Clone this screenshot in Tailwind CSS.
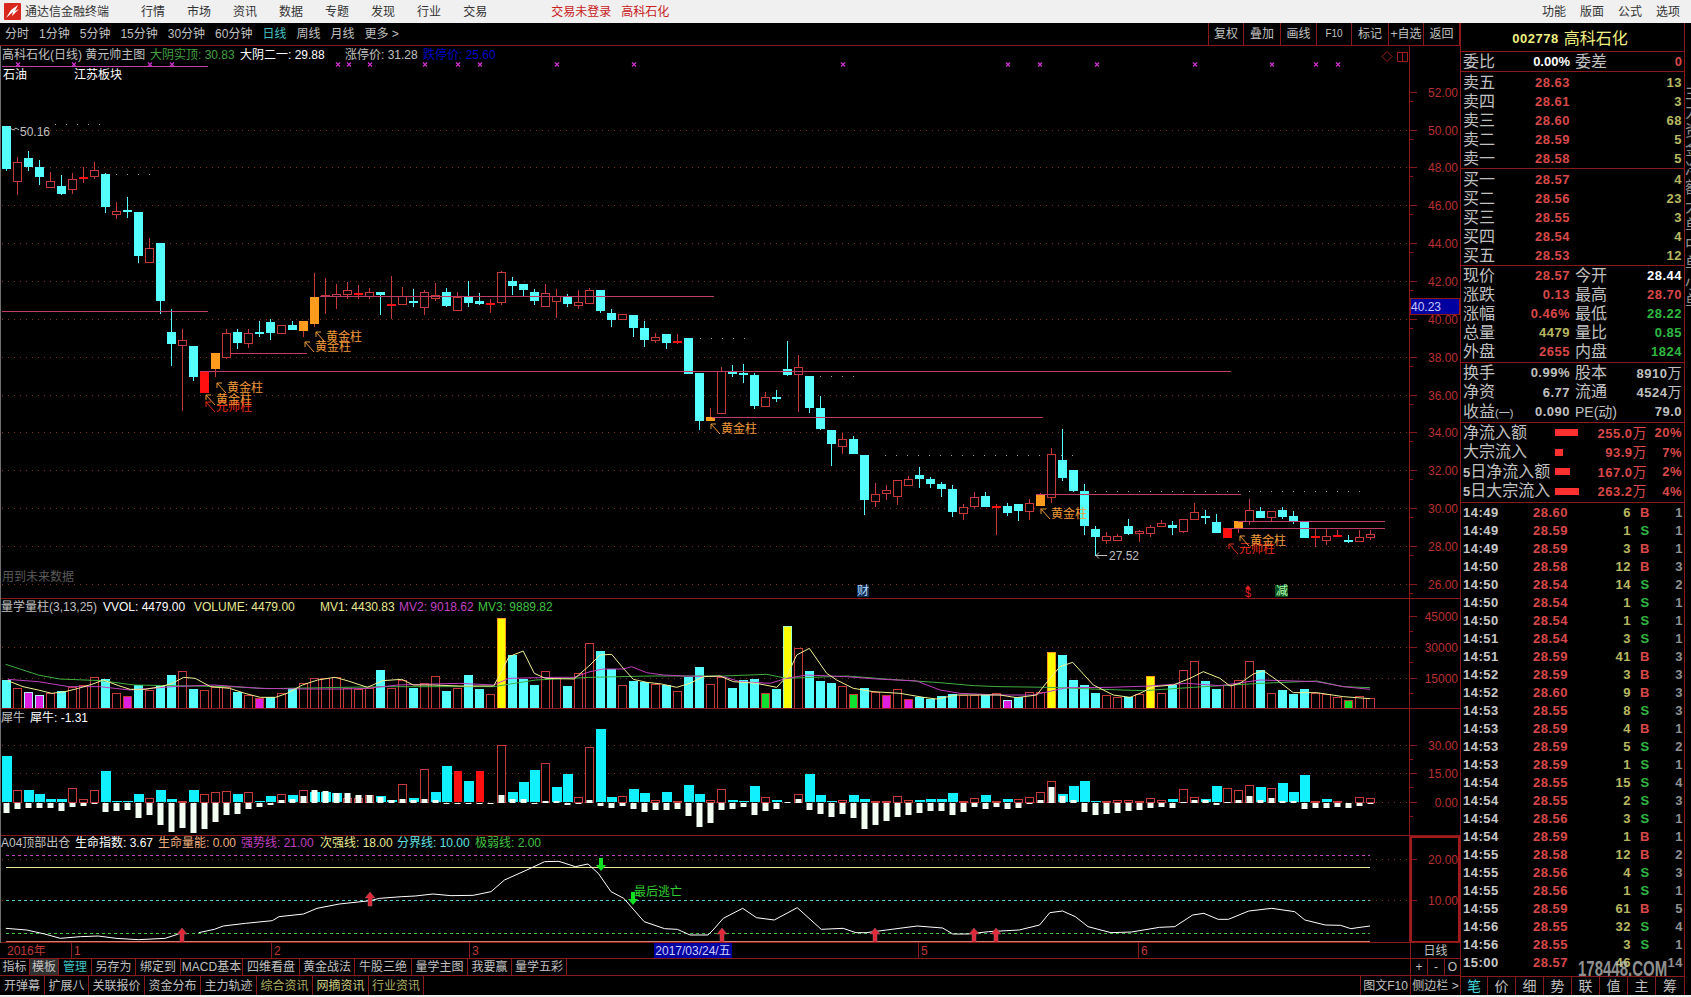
<!DOCTYPE html>
<html lang="zh">
<head>
<meta charset="UTF-8">
<title>通达信金融终端</title>
<script src="https://cdn.jsdelivr.net/npm/@tailwindcss/browser@4"></script>
</head>
<body class="bg-black">
<div class="w-[1691px] h-[997px] overflow-hidden flex flex-col bg-black text-[12px] leading-none text-[#c0c0c0] font-['Liberation_Sans','Noto_Sans_CJK_SC',sans-serif]">

  <!-- title bar -->
  <div class="h-[23px] shrink-0 bg-[#f0f0f0] flex items-center text-[#333]">
    <svg width="17" height="17" viewBox="0 0 17 17" class="ml-[4px] shrink-0"><rect width="17" height="17" rx="1" fill="#d8281e"/><path d="M2 15 L7 7 L14 2 L11 8 L15 6 L8 13 L9 9 Z" fill="#fff"/></svg>
    <span class="ml-[4px]">通达信金融终端</span>
    <div class="ml-[32px] flex gap-[22px]"><span>行情</span><span>市场</span><span>资讯</span><span>数据</span><span>专题</span><span>发现</span><span>行业</span><span>交易</span></div>
    <div class="ml-[64px] flex gap-[10px] text-[#c8201c]"><span>交易未登录</span><span>高科石化</span></div>
    <div class="ml-auto mr-[11px] flex gap-[14px]"><span>功能</span><span>版面</span><span>公式</span><span>选项</span></div>
  </div>

  <div class="flex h-[972px] shrink-0">
    <!-- left column -->
    <div class="w-[1460px] shrink-0 flex flex-col">
      <div class="h-[23px] shrink-0 flex items-center border-b border-[#8a1a1a] pl-[5px] gap-[10px]">
        <span>分时</span><span>1分钟</span><span>5分钟</span><span>15分钟</span><span>30分钟</span><span>60分钟</span><span class="text-[#40c0c0]">日线</span><span>周线</span><span>月线</span><span>更多 &gt;</span>
        <div class="ml-auto flex h-full border-r border-[#8a1a1a]">
          <span class="w-[35px] flex items-center justify-center border-l border-[#8a1a1a]">复权</span>
          <span class="w-[37px] flex items-center justify-center border-l border-[#8a1a1a]">叠加</span>
          <span class="w-[36px] flex items-center justify-center border-l border-[#8a1a1a]">画线</span>
          <span class="w-[35px] flex items-center justify-center border-l border-[#8a1a1a] text-[10px]">F10</span>
          <span class="w-[37px] flex items-center justify-center border-l border-[#8a1a1a]">标记</span>
          <span class="w-[35px] flex items-center justify-center border-l border-[#8a1a1a]">+自选</span>
          <span class="w-[36px] flex items-center justify-center border-l border-[#8a1a1a]">返回</span>
        </div>
      </div>

      <!-- chart panels, the svg holds the plotted data -->
      <div class="relative h-[897px] shrink-0 border-l border-[#707070]">
        <svg id="chart" class="absolute left-[-1px] top-0" width="1460" height="897" viewBox="0 46 1460 897"></svg>
        <div class="relative h-[553px] border-b border-[#8a1a1a]">
          <div class="flex h-[17px] items-center pl-[1px]">
            <span class="w-[148px]">高科石化(日线) 黄元帅主图</span>
            <span class="w-[90px] text-[#40a040]">大阴实顶: 30.83</span>
            <span class="w-[105px] text-white">大阴二一: 29.88</span>
            <span class="w-[78px]">涨停价: 31.28</span>
            <span class="text-[#0000c8]">跌停价: 25.60</span>
          </div>
          <div class="flex mt-[6px] pl-[2px] text-white"><span class="w-[71px]">石油</span><span>江苏板块</span></div>
        </div>
        <div class="relative h-[110px] border-b border-[#8a1a1a]">
          <div class="flex h-[16px] items-center">
            <span class="w-[102px]">量学量柱(3,13,25)</span>
            <span class="w-[91px] text-white">VVOL: 4479.00</span>
            <span class="w-[126px] text-[#e8e890]">VOLUME: 4479.00</span>
            <span class="w-[79px] text-[#e8e890]">MV1: 4430.83</span>
            <span class="w-[79px] text-[#c040c0]">MV2: 9018.62</span>
            <span class="text-[#40c040]">MV3: 9889.82</span>
          </div>
        </div>
        <div class="relative h-[127px] border-b border-[#8a1a1a]">
          <div class="flex h-[17px] items-center text-white"><span class="w-[29px] text-[#c0c0c0]">犀牛</span><span>犀牛: -1.31</span></div>
        </div>
        <div class="relative h-[107px] border-b border-[#8a1a1a]">
          <div class="flex h-[14px] items-center">
            <span class="w-[74px]">A04顶部出仓</span>
            <span class="w-[83px] text-white">生命指数: 3.67</span>
            <span class="w-[83px] text-[#f0b080]">生命量能: 0.00</span>
            <span class="w-[79px] text-[#c040c0]">强势线: 21.00</span>
            <span class="w-[77px] text-[#e8e890]">次强线: 18.00</span>
            <span class="w-[78px] text-[#60e0e0]">分界线: 10.00</span>
            <span class="text-[#40c040]">极弱线: 2.00</span>
          </div>
        </div>
      </div>

      <!-- date axis -->
      <div class="h-[16px] shrink-0 flex items-stretch border-b border-[#8a1a1a]">
        <span class="w-[71px] pl-[7px] flex items-center text-[#c03838]">2016年</span>
        <span class="w-[200px] pl-[2px] flex items-center border-l border-[#8a1a1a] text-[#c03838]">1</span>
        <span class="w-[198px] pl-[2px] flex items-center border-l border-[#8a1a1a] text-[#c03838]">2</span>
        <span class="w-[185px] pl-[2px] flex items-center border-l border-[#8a1a1a] text-[#c03838]">3</span>
        <span class="w-[78px] flex items-center justify-center bg-[#0000a0] text-[#d0d0ff]">2017/03/24/五</span>
        <span class="w-[186px] pr-[2px] flex items-center justify-end text-[#c03838]"></span>
        <span class="w-[220px] pl-[2px] flex items-center border-l border-[#8a1a1a] text-[#c03838]">5</span>
        <span class="w-[272px] pl-[2px] flex items-center border-l border-[#8a1a1a] text-[#c03838]">6</span>
        <span class="w-[50px] flex items-center justify-center border-l border-[#8a1a1a]">日线</span>
      </div>

      <div class="h-[17px] shrink-0 flex border-b border-[#8a1a1a]">
        <span class="w-[30px] flex items-center justify-center border-r border-[#8a1a1a]">指标</span>
        <span class="w-[29px] flex items-center justify-center border-r border-[#8a1a1a] bg-[#303030]">模板</span>
        <span class="w-[33px] flex items-center justify-center border-r border-[#8a1a1a] text-[#40c0c0]">管理</span>
        <span class="w-[44px] flex items-center justify-center border-r border-[#8a1a1a]">另存为</span>
        <span class="w-[45px] flex items-center justify-center border-r border-[#8a1a1a]">绑定到</span>
        <span class="w-[62px] flex items-center justify-center border-r border-[#8a1a1a]">MACD基本</span>
        <span class="w-[57px] flex items-center justify-center border-r border-[#8a1a1a]">四维看盘</span>
        <span class="w-[55px] flex items-center justify-center border-r border-[#8a1a1a]">黄金战法</span>
        <span class="w-[57px] flex items-center justify-center border-r border-[#8a1a1a]">牛股三绝</span>
        <span class="w-[56px] flex items-center justify-center border-r border-[#8a1a1a]">量学主图</span>
        <span class="w-[44px] flex items-center justify-center border-r border-[#8a1a1a]">我要赢</span>
        <span class="w-[55px] flex items-center justify-center border-r border-[#8a1a1a]">量学五彩</span>
        <div class="ml-auto flex w-[50px] border-l border-[#8a1a1a]">
          <span class="w-[17px] flex items-center justify-center border-r border-[#8a1a1a]">+</span>
          <span class="w-[17px] flex items-center justify-center border-r border-[#8a1a1a]">-</span>
          <span class="flex-1 flex items-center justify-center">O</span>
        </div>
      </div>
      <div class="h-[19px] shrink-0 flex">
        <span class="w-[45px] flex items-center justify-center border-r border-[#8a1a1a]">开弹幕</span>
        <span class="w-[44px] flex items-center justify-center border-r border-[#8a1a1a]">扩展八</span>
        <span class="w-[56px] flex items-center justify-center border-r border-[#8a1a1a]">关联报价</span>
        <span class="w-[56px] flex items-center justify-center border-r border-[#8a1a1a]">资金分布</span>
        <span class="w-[56px] flex items-center justify-center border-r border-[#8a1a1a]">主力轨迹</span>
        <span class="w-[56px] flex items-center justify-center border-r border-[#8a1a1a] text-[#b0b060]">综合资讯</span>
        <span class="w-[56px] flex items-center justify-center border-r border-[#8a1a1a] text-[#d0d080]">网摘资讯</span>
        <span class="w-[55px] flex items-center justify-center border-r border-[#8a1a1a] text-[#b0b060]">行业资讯</span>
        <span class="ml-auto w-[50px] flex items-center justify-center border-l border-[#8a1a1a]">图文F10</span>
        <span class="w-[50px] flex items-center justify-center border-l border-[#8a1a1a]">侧边栏 &gt;</span>
      </div>
    </div>

    <!-- quote panel -->
    <div class="w-[225px] shrink-0 flex flex-col border-x border-[#8a1a1a] relative">
      <div class="h-[29px] shrink-0 border-b border-[#8a1a1a] flex items-center justify-center gap-[5px] pt-[3px] pr-[5px] text-[#f0f080]">
        <span class="font-bold text-[13px] tracking-[0.5px]">002778</span><span class="text-[16px]">高科石化</span>
      </div>
      <div class="h-[20px] shrink-0 border-b border-[#8a1a1a] flex items-center pl-[2px] pr-[2px]">
        <span class="w-[40px] text-[16px]">委比</span>
        <span class="w-[67px] text-right font-bold text-[13px] text-white">0.00%</span>
        <span class="ml-[5px] text-[16px]">委差</span>
        <span class="ml-auto font-bold text-[13px] text-[#d84848]">0</span>
      </div>
      <div id="book" class="shrink-0"></div>
      <div id="quote" class="shrink-0 h-[97px] border-b border-[#8a1a1a]"></div>
      <div id="basic" class="shrink-0 h-[60px] border-b border-[#8a1a1a]"></div>
      <div id="flow" class="shrink-0 h-[80px] border-b border-[#8a1a1a]"></div>
      <div id="ticks" class="flex-1 min-h-0"></div>
      <div class="absolute left-[117px] top-[937px] text-[15px] font-bold text-[#b8b8b8]/80 scale-y-150">178448.COM</div>
      <div class="h-[19px] shrink-0 flex">
        <span class="w-[27px] flex items-center justify-center border-r border-t border-[#8a1a1a] text-[#40d8d8] text-[14px]">笔</span>
        <span class="w-[28px] flex items-center justify-center border-r border-t border-[#8a1a1a] text-[14px]">价</span>
        <span class="w-[28px] flex items-center justify-center border-r border-t border-[#8a1a1a] text-[14px]">细</span>
        <span class="w-[28px] flex items-center justify-center border-r border-t border-[#8a1a1a] text-[14px]">势</span>
        <span class="w-[28px] flex items-center justify-center border-r border-t border-[#8a1a1a] text-[14px]">联</span>
        <span class="w-[28px] flex items-center justify-center border-r border-t border-[#8a1a1a] text-[14px]">值</span>
        <span class="w-[28px] flex items-center justify-center border-r border-t border-[#8a1a1a] text-[14px]">主</span>
        <span class="flex-1 flex items-center justify-center border-t border-[#8a1a1a] text-[14px]">筹</span>
      </div>
    </div>
    <div class="flex-1 overflow-hidden pt-[60px] text-[16px] leading-[19px] text-[#909090]">主<br>力<br>资<br>金<br>净<br>额<br>大<br>单<br>中<br>单<br>小<br>单</div>
  </div>
  <div class="flex-1 bg-[#f0f0f0]"></div>
</div>

<script>
// --- quote panel rows
const num = 'font-bold text-[13px] tracking-[0.5px]';
const RED = 'text-[#d84848]', GRN = 'text-[#30b840]', YEL = 'text-[#b8b860]', WHT = 'text-white', GRY = 'text-[#c0c0c0]';

function bookRow(label, price, qty) {
  return `<div class="h-[19px] flex items-center pl-[2px] pr-[2px]">
    <span class="w-[40px] text-[16px] text-[#c0c0c0]">${label}</span>
    <span class="w-[67px] text-right ${num} ${RED}">${price}</span>
    <span class="ml-auto ${num} ${YEL}">${qty}</span></div>`;
}
const sell = [['卖五','28.63',13],['卖四','28.61',3],['卖三','28.60',68],['卖二','28.59',5],['卖一','28.58',5]];
const buy = [['买一','28.57',4],['买二','28.56',23],['买三','28.55',3],['买四','28.54',4],['买五','28.53',12]];
document.getElementById('book').innerHTML =
  `<div class="h-[97px] pt-[1px] border-b border-[#8a1a1a]">${sell.map(r => bookRow(...r)).join('')}</div>` +
  `<div class="h-[97px] pt-[1px] border-b border-[#8a1a1a]">${buy.map(r => bookRow(...r)).join('')}</div>`;

function pairRow(h, a, av, ac, b, bv, bc) {
  return `<div class="${h} flex items-center pl-[2px] pr-[2px]">
    <span class="w-[40px] text-[16px] whitespace-nowrap">${a}</span>
    <span class="w-[67px] text-right ${num} ${ac}">${av}</span>
    <span class="ml-[5px] text-[16px] whitespace-nowrap">${b}</span>
    <span class="ml-auto ${num} ${bc}">${bv}</span></div>`;
}
document.getElementById('quote').innerHTML = [
  ['现价','28.57',RED,'今开','28.44',WHT],
  ['涨跌','0.13',RED,'最高','28.70',RED],
  ['涨幅','0.46%',RED,'最低','28.22',GRN],
  ['总量','4479',YEL,'量比','0.85',GRN],
  ['外盘','2655',RED,'内盘','1824',GRN]
].map(r => pairRow('h-[19px]', ...r)).join('');
document.getElementById('basic').innerHTML = [
  ['换手','0.99%',GRY,'股本','8910<span class="font-normal text-[14px]">万</span>',GRY],
  ['净资','6.77',GRY,'流通','4524<span class="font-normal text-[14px]">万</span>',GRY],
  ['收益<span class="text-[11px]">(一)</span>','0.090',GRY,'<span class="text-[14px]">PE(动)</span>','79.0',GRY]
].map(r => pairRow('h-[19.5px]', ...r)).join('');

const flow = [
  ['净流入额', 23, '255.0', '20%'],
  ['大宗流入', 8, '93.9', '7%'],
  ['<b class="text-[13px]">5</b>日净流入额', 15, '167.0', '2%'],
  ['<b class="text-[13px]">5</b>日大宗流入', 24, '263.2', '4%']
];
document.getElementById('flow').innerHTML = flow.map(r => `<div class="h-[19.5px] flex items-center pl-[2px] pr-[2px]">
  <span class="w-[92px] text-[16px] whitespace-nowrap">${r[0]}</span>
  <span class="w-[30px]"><span class="block h-[7px] bg-[#ff3030]" style="width:${r[1]}px"></span></span>
  <span class="w-[62px] text-right ${num} ${RED}">${r[2]}<span class="font-normal text-[14px]">万</span></span>
  <span class="ml-auto ${num} ${RED}">${r[3]}</span></div>`).join('');

const ticks = `14:49 28.60 6 B 1|14:49 28.59 1 S 1|14:49 28.59 3 B 1|14:50 28.58 12 B 3|14:50 28.54 14 S 2|14:50 28.54 1 S 1|14:50 28.54 1 S 1|14:51 28.54 3 S 1|14:51 28.59 41 B 3|14:52 28.59 3 B 3|14:52 28.60 9 B 3|14:53 28.55 8 S 3|14:53 28.59 4 B 1|14:53 28.59 5 S 2|14:53 28.59 1 S 1|14:54 28.55 15 S 4|14:54 28.55 2 S 3|14:54 28.56 3 S 1|14:54 28.59 1 B 1|14:55 28.58 12 B 2|14:55 28.56 4 S 3|14:55 28.56 1 S 1|14:55 28.59 61 B 5|14:56 28.55 32 S 4|14:56 28.55 3 S 1|15:00 28.57 46 - 14`.split('|');
document.getElementById('ticks').innerHTML = ticks.map(t => {
  const [a, b, c, d, e] = t.split(' ');
  return `<div class="h-[18px] flex items-center pl-[2px] ${num}">
    <span class="w-[50px] text-[#c8c8c8]">${a}</span>
    <span class="w-[55px] text-right ${RED}">${b}</span>
    <span class="w-[63px] text-right ${YEL}">${c}</span>
    <span class="w-[28px] text-center ${d == 'B' ? RED : GRN}">${d == '-' ? '' : d}</span>
    <span class="w-[24px] text-right text-[#909090]">${e}</span></div>`;
}).join('');

// --- chart data: pixels read from the screen, three crops so three y offsets
const CANDLE_A = `c,18,18,147,152 r,110,127,182,225 c,92,114,141,152 c,120,141,170,195 r,155,184,200,200 c,165,198,222,225 r,160,176,206,222 R,140,170,172,188 r,126,149,167,178 c,160,163,260,279 r,246,272,282,297 c,232,271,271,293 c,277,277,407,428 r,354,385,425,425 c,370,370,543,582 c,568,636,672,738 r,628,661,674,873 c,679,679,771,782 R,752,752,818,818 O,698,698,747,772 r,628,640,710,716 c,628,637,668,687 r,628,638,670,683 c,603,637,637,650 c,597,606,638,660 r,616,616,640,640 c,603,616,629,630 O,604,604,632,650 O,460,530,611,620 r,475,526,526,582 r,492,523,527,567 r,487,511,522,537 R,495,520,522,537 r,505,517,527,537 c,517,517,524,585 R,468,553,555,597 r,502,527,553,556 c,507,544,548,560 r,510,517,562,585 r,490,524,533,542 c,505,517,557,560 r,515,532,569,570 c,484,532,548,561 c,520,544,551,556 R,537,550,551,579`;
const CANDLE_B = `r,62,67,155,165 c,82,93,108,135 c,102,102,120,138 c,117,126,153,165 r,102,130,167,167 r,117,139,152,205 c,132,140,162,170 r,120,157,164,177 r,113,120,158,158 c,120,120,182,188 c,177,189,210,232 r,193,193,206,209 c,195,195,234,262 c,213,234,270,290 r,250,262,270,278 c,252,252,279,297 R,252,274,278,282`;
const CANDLE_C = `c,54,54,162,162 c,160,160,302,330 O,265,290,302,302 r,142,152,280,280 c,135,155,155,170 c,132,160,160,190 c,160,165,258,267 r,217,232,258,262 c,210,230,230,245 c,63,148,165,168 r,105,142,163,275 c,168,168,264,278 c,228,264,328,330 c,330,330,372,438 r,338,358,377,402 c,348,357,403,403 c,405,405,540,585 r,490,523,542,561 r,495,511,518,541 r,481,481,527,555 r,468,478,494,495 c,440,465,477,503 c,472,477,491,503 c,486,491,506,530 c,495,507,576,590 r,553,561,578,600 r,517,532,557,563 c,517,528,561,561 R,553,559,563,645 c,549,558,579,587 c,553,553,572,603 r,538,550,574,600 O,520,525,557,557 r,385,403,530,548 c,328,420,473,482 c,450,450,513,515 c,492,513,618,645 c,618,627,651,708 r,637,649,660,672 r,643,649,659,660 c,598,618,641,644 r,630,634,640,665 r,615,620,638,650 r,600,609,619,621 c,603,616,623,645 r,598,598,632,640 r,549,577,598,600 c,570,587,590,612 c,583,606,638,640 R,625,625,653,653 O,604,604,624,640 r,538,571,603,615 c,560,574,593,595 r,574,574,592,603 c,562,571,591,598 c,573,589,603,613 c,606,606,653,653 R,628,647,650,680 r,628,649,660,675 R,630,646,648,650 c,645,660,660,668 r,630,652,664,665 r,630,643,652,660`;
function parseCandles(s, y0) {
  return s.split(' ').map(c => { const p = c.split(','); return [p[0], ...p.slice(1).map(v => y0 + v / 3)]; });
}
const candles = [...parseCandles(CANDLE_A, 120), ...parseCandles(CANDLE_B, 250), ...parseCandles(CANDLE_C, 320)];

// volume bars, i0-53 base 590, i54-124 base 600
const VOL_A = `c270 r295 m306 m315 r310 c303 r290 r285 r262 c267 r310 n318 c284 r300 c285 c255 r243 c297 r300 r290 r290 c305 r315 n325 c322 r310 c295 r280 r265 r265 r262 r295 r298 r295 c240 r295 r270 c293 r280 r258 c303 r295 c255 c297 r313 Y85 c195 c267 c285 r243 r263 c288 r250 r160`;
const VOL_B = `c153 c207 r256 c243 c247 r252 c254 r273 c230 c201 r252 r230 c264 c241 c237 g280 c267 Z78 r145 c213 c243 c249 r258 g282 c264 r276 n285 r267 n297 c291 c296 c289 c282 r285 r285 c285 r280 m300 c292 r277 r277 Y157 c165 c240 c256 c278 r286 r291 c290 r281 Y229 r279 c256 r211 r183 c243 c267 r256 r241 r184 c210 r280 c270 c281 c268 r279 r283 r291 g300 r289 r295`;
const volume = [...VOL_A.split(' ').map(v => [v[0], 590 + v.slice(1) / 3]), ...VOL_B.split(' ').map(v => [v[0], 600 + v.slice(1) / 3])];

// niu panel: up bar top / white bar end
const NIU_A = `c498,668 r601,656 c600,653 c612,653 c627,653 c627,662 r595,650 r627,647 r601,640 c543,665 c634,663 c634,660 c612,683 r625,675 c600,705 c627,725 r633,713 c600,730 r613,717 r607,695 r603,675 c612,672 r607,657 c634,650 c618,644 r613,630 c615,628 r601,618 c605,600 c605,603 c609,609 r625,609 r625,615 r615,616 c618,622 c631,630 r583,627 c624,630 r537,627 c606,630 c528,643 R543,640 c573,643 R543,640 c635,642 r465,615 c606,628 c576,628 c540,640 r520,633 c591,632 c552,645 r622,642 r472,630`;
const NIU_B = `c388,617 c591,623 r589,617 c568,627 c579,635 r601,629 c576,629 r602,627 c555,647 c582,680 r601,668 r568,630 c601,627 c604,620 c558,644 r592,632 c601,627 r605,607 r583,597 c522,629 c585,641 c603,650 r601,641 c585,653 c597,687 r603,675 r603,662 r589,650 r601,644 c601,638 c597,632 c597,632 c579,644 r603,636 r595,620 c585,627 r603,620 c597,627 r597,623 r591,612 r577,600 r544,561 c582,588 c558,600 c543,636 c603,644 r603,641 r601,638 r601,632 r603,629 r595,623 r601,620 c597,623 r567,606 r591,600 c597,600 c558,614 r565,606 r570,600 r555,588 c561,600 r565,594 c549,603 c576,603 c525,626 r603,623 c597,623 r603,620 r605,623 r591,617 r595,613`;
const niu = [...NIU_A.split(' ').map(v => [v[0], ...v.slice(1).split(',').map(n => 590 + n / 3)]),
             ...NIU_B.split(' ').map(v => [v[0], ...v.slice(1).split(',').map(n => 600 + n / 3)])];

const z5 = (X, v) => [X / 2.613, 590 + v / 3];
const z10 = (X, v) => [590 + X / 3, 600 + v / 3];
const z11 = (X, v) => [1000 + X / 3, 600 + v / 3];
const z6 = (X, v) => [X / 2.24, 830 + v / 3];
const z12 = (X, v) => [560 + X / 1.96, 840 + v / 3];
const pts = (f, a) => { const o = []; for (let k = 0; k < a.length; k += 2) o.push(f(a[k], a[k + 1])); return o; };

const mv1 = [...pts(z5, [20,272,60,290,100,300,135,310,170,305,205,295,240,283,270,270,310,287,340,298,380,298,420,290,450,280,480,262,510,265,550,290,600,295,640,310,680,322,720,322,750,310,790,285,830,270,875,262,910,273,960,292,1000,272,1050,268,1080,285,1130,285,1200,288,1290,288,1310,245,1330,200,1367,183,1396,250,1425,265,1500,267]),
  ...pts(z10, [0,195,30,165,65,163,100,205,130,238,170,247,215,252,260,262,300,250,340,230,390,228,430,245,500,250,560,262,590,230,620,165,658,145,710,220,740,240,790,265,850,275,930,280,1000,292,1040,297,1100,285,1200,285]),
  ...pts(z11, [0,285,50,293,110,285,150,235,180,200,218,187,280,255,340,285,390,292,420,280,460,260,520,255,570,235,610,215,660,235,690,258,720,250,760,222,790,212,830,240,880,278,950,278,1030,290,1110,296])];
const mv2 = [...pts(z5, [20,268,100,275,180,290,260,290,340,300,450,290,560,285,680,295,800,297,900,297,960,295,1040,285,1200,280,1290,285,1330,265,1450,262,1500,262]),
  ...pts(z10, [0,215,40,207,100,207,125,200,170,218,220,225,280,228,400,230,450,245,540,250,590,235,650,225,770,230,860,237,980,243,1050,270,1110,280]),
  ...pts(z11, [0,285,100,285,200,263,330,262,450,258,560,250,660,257,780,240,950,245,1030,260,1110,268])];
const mv3 = [...pts(z5, [15,223,100,255,155,267,265,272,350,285,600,290,700,296,850,293,1000,290,1290,290,1400,270]),
  ...pts(z10, [0,232,180,228,400,228,530,223,590,235,770,228,900,238,1050,248,1150,257]),
  ...pts(z11, [0,260,150,262,300,268,430,272,580,262,780,250,950,243,1030,260,1110,263])];

const life1 = pts(z6, [13,295,60,300,100,312,135,325,180,320,220,318,260,325,310,329,370,325,400,312]);
const life2 = [...pts(z6, [445,308,480,298,500,288,550,280,610,272,625,260,680,252,710,235,760,222,830,212,850,205,900,200,930,198,970,192,1010,197,1060,196,1100,185,1130,150,1180,120,1220,95,1250,94]),
  ...pts(z12, [0,65,30,80,55,72,75,100,100,155,125,175,165,245,205,266,230,268,255,285,290,285,300,270,320,235,358,205,385,233,420,240,465,203,512,268,555,265,580,278,600,278,640,270,700,258,750,264,770,282,800,282,840,275,900,270,940,255,960,218,985,213,1010,230,1035,260,1080,278,1120,276,1175,262,1205,260,1240,225,1262,220,1290,238,1310,238,1350,213,1395,205,1440,215,1460,240,1500,255,1530,256,1550,266,1568,262]), [1370, 926]];

// --- drawing
const svg = document.getElementById('chart');
const FONT = "'Liberation Sans','Noto Sans CJK SC',sans-serif";
function add(tag, attrs, text) {
  const e = document.createElementNS('http://www.w3.org/2000/svg', tag);
  for (const k in attrs) e.setAttribute(k, attrs[k]);
  if (text !== undefined) e.textContent = text;
  svg.appendChild(e);
  return e;
}
const LINE_RED = '#8a1a1a', GRID = '#7a3020', CYAN = '#55ffff', HOLLOW = '#c43a3a', PINK = '#c03c68';
const hline = (y, x1, x2, c, w, dash) => add('line', { x1, x2, y1: y + .5, y2: y + .5, stroke: c, 'stroke-width': w || 1, ...(dash ? { 'stroke-dasharray': dash } : {}) });
const label = (x, y, t, c, o) => add('text', { x, y, fill: c, 'font-size': 12, 'font-family': FONT, ...(o || {}) }, t);
const line = (p, c, w) => add('polyline', { points: p.map(q => q.join(',')).join(' '), fill: 'none', stroke: c, 'stroke-width': w || 1 });

// grids and axis
for (let p = 52; p >= 26; p -= 2) {
  const y = Math.round(356.7 + (38 - p) * 18.93);
  if (p < 52) hline(y, 2, 1409, GRID, 1, '1 5');
  label(1458, y + 5, p + '.00', '#b83030', { 'text-anchor': 'end' });
  hline(y, 1409, 1417, LINE_RED);
  hline(y + 9, 1409, 1413, LINE_RED);
}
// cursor price on the axis
add('rect', { x: 1410.5, y: 298.5, width: 49, height: 16, fill: '#0000a0', stroke: '#8a1a1a' });
label(1411, 311, '40.23', '#c8c8ff');

[[646.7, '30000'], [677.7, '15000'], [616, '45000']].forEach(([y, t], k) => {
  if (k < 2) hline(Math.round(y), 2, 1409, GRID, 1, '1 5');
  hline(Math.round(y), 1409, 1417, LINE_RED);
  hline(Math.round(y) + 15, 1409, 1413, LINE_RED);
  label(1458, y + 5, t, '#b83030', { 'text-anchor': 'end' });
});
[[744.7, '30.00'], [773.3, '15.00'], [802, '0.00']].forEach(([y, t]) => {
  hline(Math.round(y), 2, 1409, GRID, 1, '1 5');
  hline(Math.round(y), 1409, 1417, LINE_RED);
  hline(Math.round(y) + 14, 1409, 1413, LINE_RED);
  label(1458, y + 5, t, '#b83030', { 'text-anchor': 'end' });
});
[[859, '20.00'], [900, '10.00']].forEach(([y, t]) => {
  hline(y, 2, 1409, GRID, 1, '1 5');
  hline(y, 1409, 1417, LINE_RED);
  label(1458, y + 5, t, '#b83030', { 'text-anchor': 'end' });
});
add('line', { x1: 1409.5, x2: 1409.5, y1: 46, y2: 943, stroke: LINE_RED });
add('rect', { x: 1411, y: 837, width: 48, height: 105, fill: 'none', stroke: '#a01c1c', 'stroke-width': 2 });

// top strip: x marks, pink line, corner marks
hline(66, 2, 208, '#c040a0');
[18,74,150,172,338,349,370,425,458,480,557,634,843,1008,1040,1097,1195,1272,1316,1338].forEach(x => {
  add('path', { d: `M${x - 2} 62.5 l4 4 m0 -4 l-4 4`, stroke: '#d030d0', 'stroke-width': 1.2, fill: 'none' });
});
add('path', { d: 'M1387 51.5 L1392 56.5 L1387 61.5 L1382 56.5 Z', fill: 'none', stroke: '#a02020' });
add('path', { d: 'M1397.5 52.5 h10 v9 h-10 Z M1402.5 52.5 v9', fill: 'none', stroke: '#a02020' });
label(2, 581, '用到未来数据', '#5a5a5a');

// sparse white dots above the prices
[[124, 55, 100], [174, 116, 150], [338, 700, 745], [376, 820, 855], [455, 885, 1075], [491, 1095, 1370]].forEach(d => hline(d[0], d[1], d[2], '#a0a0a0', 1, '1 10'));

// candles
candles.forEach((c, i) => {
  const [type, hi, top, bot, lo] = c, cx = 6.5 + 11 * i;
  const col = { c: CYAN, r: HOLLOW, R: '#ff1010', O: '#ff9c1e' }[type];
  add('line', { x1: cx, x2: cx, y1: Math.round(hi), y2: Math.round(lo), stroke: type == 'O' ? HOLLOW : (type == 'R' ? HOLLOW : col) });
  const t = Math.round(top), b = Math.round(bot);
  if (b - t < 2 && type != 'r') add('rect', { x: cx - 4.5, y: t, width: 9, height: 2, fill: col });
  else if (type == 'r') add('rect', { x: cx - 4, y: t + .5, width: 8, height: Math.max(b - t, 1), fill: '#000', stroke: col });
  else add('rect', { x: cx - 4.5, y: t, width: 9, height: b - t, fill: col });
});

// support lines over the candles
[[310.7, 2, 208], [352.7, 231, 307], [370.7, 200, 1231], [296.4, 320, 714], [416.7, 712, 1043], [494.3, 1036, 1241], [521.3, 1238, 1385], [528.3, 1228, 1385]]
  .forEach(l => hline(Math.round(l[0]), l[1], l[2], PINK));

// signal tags
function tag(x, y, t, c) {
  add('path', { d: `M${x + 9} ${y + 5} L${x} ${y - 5} m5 0 h-5 v5`, stroke: c, fill: 'none' });
  label(x + 10, y + 4, t, c);
}
const GOLD = '#f09a38', MARSHAL = '#e82a18';
tag(206, 407, '元帅柱', MARSHAL);
tag(217, 388, '黄金柱', GOLD);
tag(206, 400, '黄金柱', GOLD);
tag(305, 347, '黄金柱', GOLD);
tag(316, 337, '黄金柱', GOLD);
tag(711, 429, '黄金柱', GOLD);
tag(1041, 514, '黄金柱', GOLD);
tag(1229, 549, '元帅柱', MARSHAL);
tag(1240, 541, '黄金柱', GOLD);

label(20, 136, '50.16', '#c0c0c0');
add('path', { d: 'M9 127 l4 3 l3 -2 l3 2', stroke: '#c0c0c0', fill: 'none' });
label(1109, 560, '27.52', '#c0c0c0');
add('path', { d: 'M1096 555.5 h11 M1096 555.5 l3 -3 M1096 555.5 l3 3', stroke: '#c0c0c0', fill: 'none' });

add('rect', { x: 857, y: 585, width: 12, height: 12, fill: '#102c50' });
label(857, 595, '财', '#b0d8ff');
add('path', { d: 'M1248 585 l-3 4 h6 Z', fill: '#e02020' });
label(1245, 597, '$', '#e02020', { 'font-size': 11 });
add('rect', { x: 1275, y: 585, width: 13, height: 12, fill: '#0e5020' });
label(1276, 595, '减', '#b0ffb0');

// volume bars
const BASE = 708;
volume.forEach((v, i) => {
  const [type, top] = v, x = 2 + 11 * i, t = Math.round(top), h = BASE - t;
  const cell = (fill, stroke) => add('rect', { x: x + .5, y: t + .5, width: 8, height: h, fill, stroke });
  if (type == 'c') add('rect', { x, y: t, width: 9, height: h + 1, fill: CYAN });
  else if (type == 'r') cell('#000', HOLLOW);
  else if (type == 'm') cell('#e020e0', '#b0f0ff');
  else if (type == 'n') cell('#e020e0', HOLLOW);
  else if (type == 'g') cell('#10e030', HOLLOW);
  else if (type == 'Y') { cell('#ffff00', '#ff9c1e'); }
  else if (type == 'Z') { cell('#ffff00', '#a0ffc0'); }
});
line(mv3, '#40b040');
line(mv2, '#c040c0');
line(mv1, '#f0f090');

// niu bars
const ZERO = 802;
niu.forEach((v, i) => {
  const [type, top, end] = v, x = 2 + 11 * i, t = Math.round(top), h = ZERO - t;
  if (type == 'c') add('rect', { x, y: t, width: 10, height: h, fill: '#10f0ff' });
  else if (type == 'R') add('rect', { x: x + 1, y: t, width: 8, height: h, fill: '#ff1010' });
  else add('rect', { x: x + .5, y: t + .5, width: 8, height: h, fill: '#000', stroke: HOLLOW });
  const e = Math.round(end);
  add('rect', { x: x + 1.5, y: Math.min(e, ZERO + 1), width: 6, height: Math.max(Math.abs(e - ZERO - 1), 1), fill: '#f4fff4' });
});

// life panel
hline(855, 6, 1370, '#c040c0', 1, '3 3');
hline(867, 6, 1370, '#e8e890');
hline(900, 6, 1370, '#50d0d0', 1, '3 3');
hline(933, 6, 1370, '#40c040', 1, '3 3');
hline(941, 6, 1370, '#d08070');
line(life1, '#ffffff');
line(life2, '#ffffff');
function upArrow(x, y) {
  add('path', { d: `M${x} ${y - 8} l5 6 h-3 v8 h-4 v-8 h-3 Z`, fill: '#e02838', stroke: '#a06070', 'stroke-width': .5 });
}
function downArrow(x, y) {
  add('path', { d: `M${x} ${y + 6} l5 -6 h-3 v-7 h-4 v7 h-3 Z`, fill: '#10e020' });
}
[[182, 936], [370, 900], [722, 936], [875, 936], [974, 936], [996, 936]].forEach(a => upArrow(...a));
downArrow(601, 865);
downArrow(633, 899);
label(634, 896, '最后逃亡', '#30d030');
</script>
</body>
</html>
